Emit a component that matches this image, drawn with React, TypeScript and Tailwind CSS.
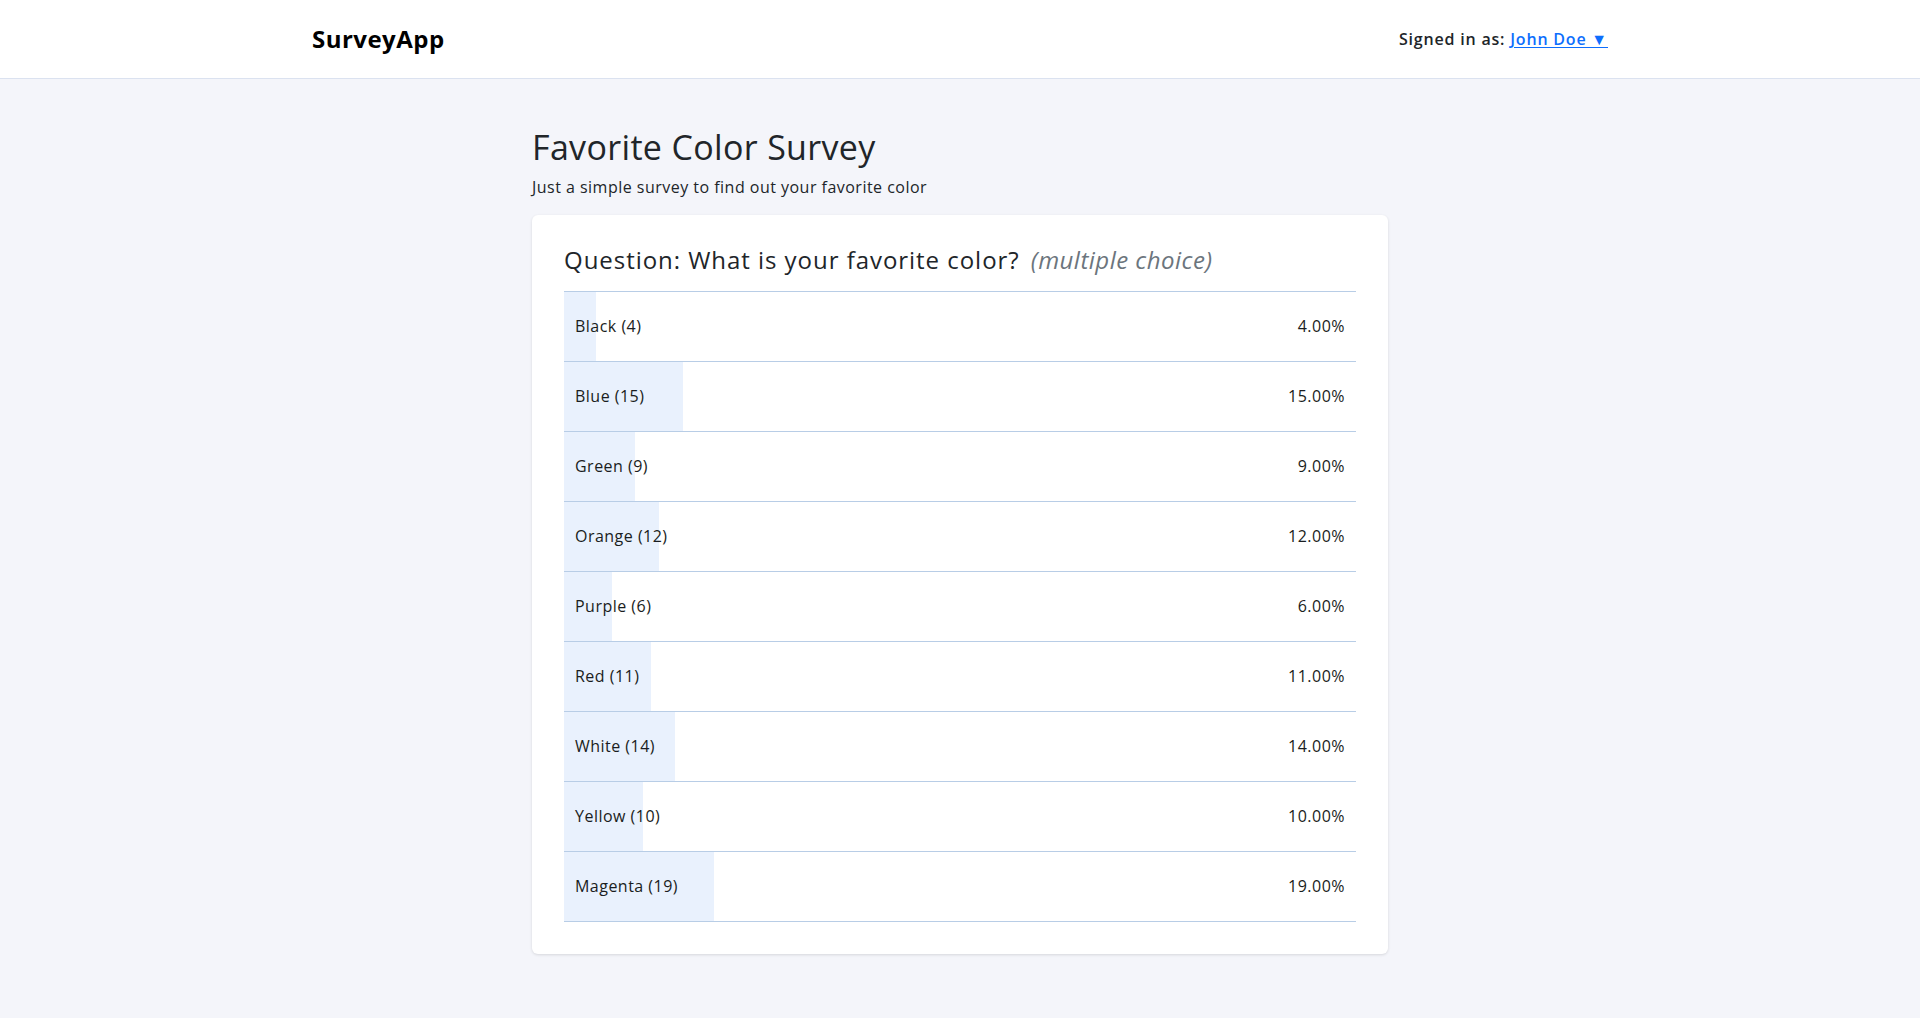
import React from 'react';

const results = [
  { label: 'Black', count: 4 },
  { label: 'Blue', count: 15 },
  { label: 'Green', count: 9 },
  { label: 'Orange', count: 12 },
  { label: 'Purple', count: 6 },
  { label: 'Red', count: 11 },
  { label: 'White', count: 14 },
  { label: 'Yellow', count: 10 },
  { label: 'Magenta', count: 19 },
];

export default function App() {
  const total = results.reduce((sum, r) => sum + r.count, 0);

  return (
    <div className="min-h-screen bg-[#f4f5fa] text-[#212529] font-['Open_Sans',sans-serif] tracking-[0.03em]">
      {/* Header */}
      <header className="bg-white border-b border-[#dbe2f0]">
        <div className="max-w-[1296px] mx-auto h-[78px] flex items-center justify-between">
          <span className="text-[24px] font-bold text-black tracking-[0.02em]">SurveyApp</span>
          <div className="text-[16px] font-semibold tracking-[0.05em]">
            Signed in as:{' '}
            <a href="#" className="text-[#0d6efd] underline underline-offset-2">John Doe ▼</a>
          </div>
        </div>
      </header>

      {/* Main */}
      <main className="w-[856px] mx-auto pt-[47px] pb-16">
        <h1 className="text-[34px] leading-tight tracking-[0.01em]">Favorite Color Survey</h1>
        <p className="text-[16px] mt-[6px] mb-[16px]">Just a simple survey to find out your favorite color</p>

        <div className="bg-white rounded-md shadow-[0_1px_3px_rgba(0,0,0,0.12)] px-8 pt-[27px] pb-8">
          <h2 className="text-[24px] mb-[13px] tracking-[0.04em]">
            Question: What is your favorite color?{' '}
            <span className="italic text-[#6c757d] ml-1 tracking-[0.02em]">(multiple choice)</span>
          </h2>
          <div className="border-t border-[#b8cde6]">
            {results.map((r) => {
              const pct = (r.count / total) * 100;
              return (
                <div key={r.label} className="relative h-[70px] border-b border-[#b8cde6] flex items-center justify-between px-[11px] text-[16px] text-[#1a1d21]">
                  <div className="absolute left-0 top-0 bottom-0 bg-[#e9f1fd]" style={{ width: `${pct}%` }} />
                  <span className="relative">{r.label} ({r.count})</span>
                  <span className="relative">{pct.toFixed(2)}%</span>
                </div>
              );
            })}
          </div>
        </div>
      </main>
    </div>
  );
}
